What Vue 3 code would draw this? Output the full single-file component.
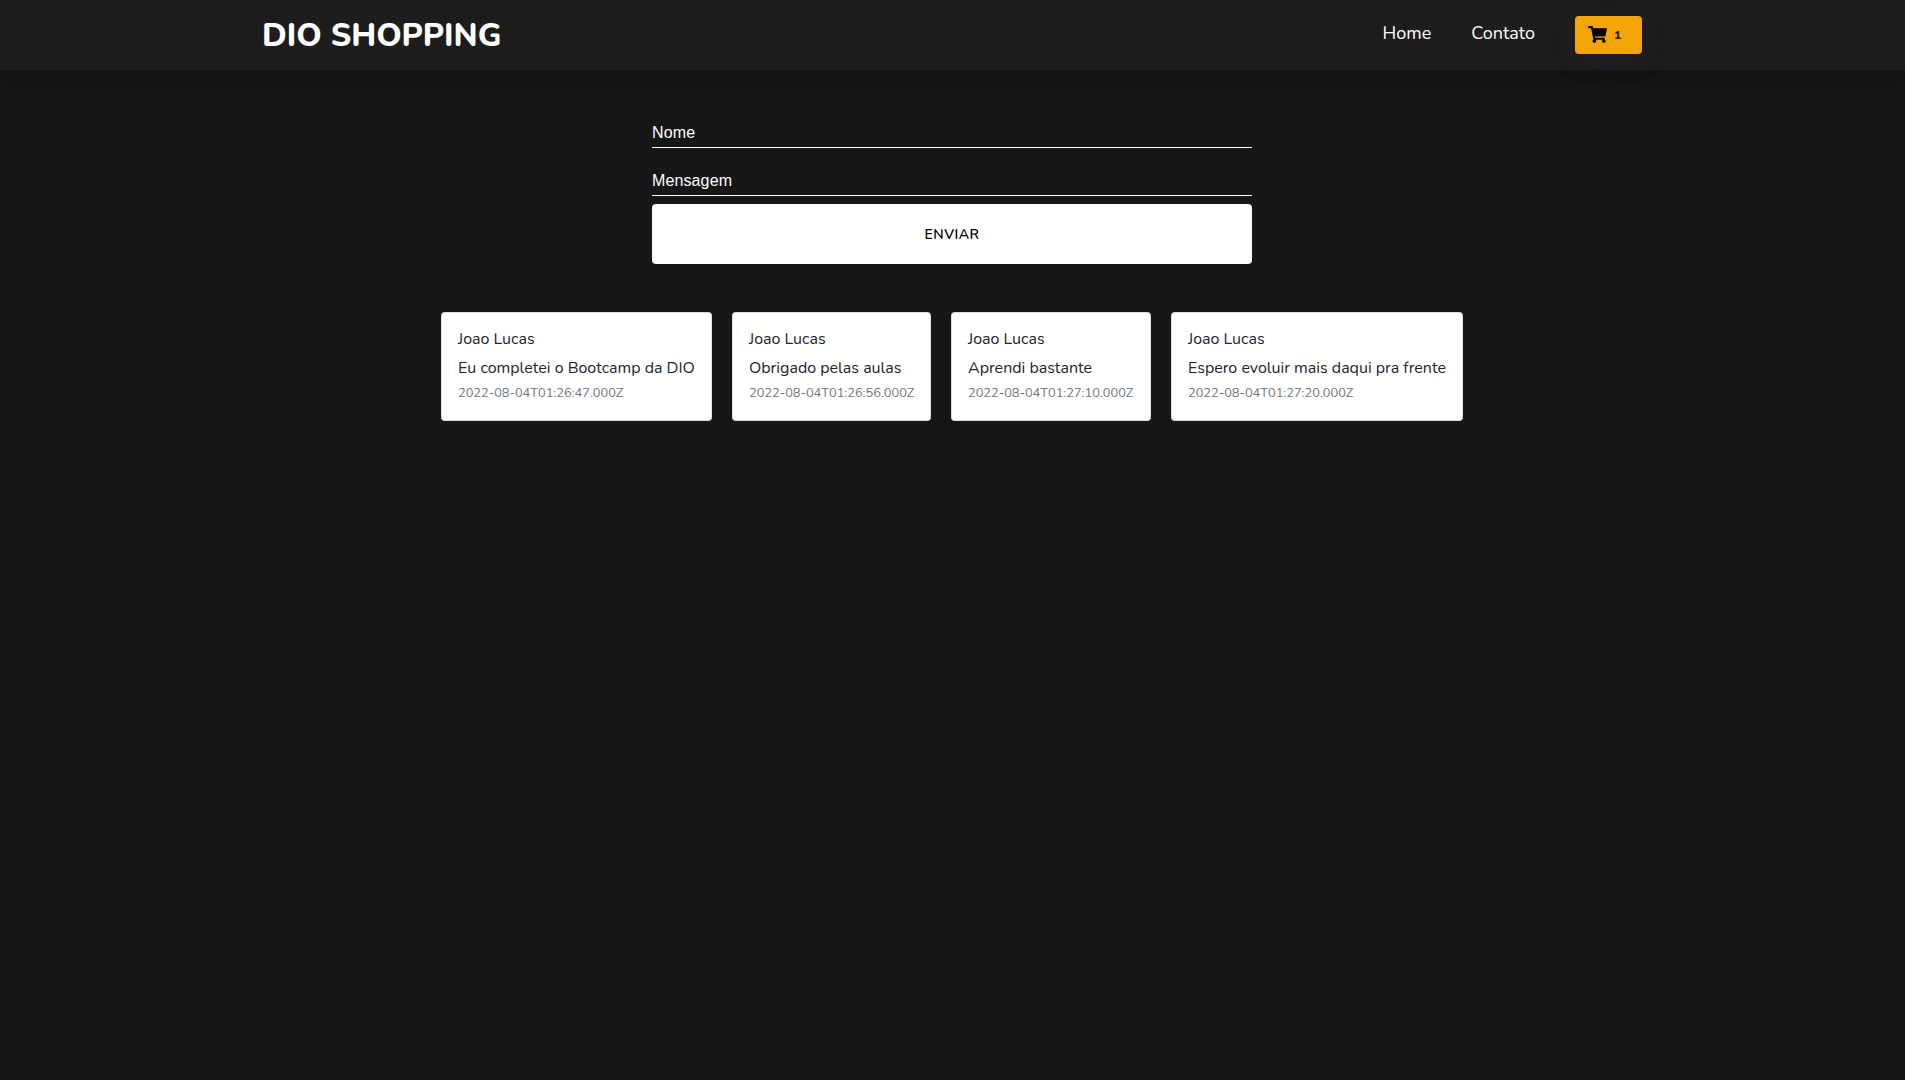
<script setup>
const links = ['Home', 'Contato']
const messages = [
  { id: 1, name: 'Joao Lucas', text: 'Eu completei o Bootcamp da DIO', date: '2022-08-04T01:26:47.000Z', width: 271 },
  { id: 2, name: 'Joao Lucas', text: 'Obrigado pelas aulas', date: '2022-08-04T01:26:56.000Z', width: 199 },
  { id: 3, name: 'Joao Lucas', text: 'Aprendi bastante', date: '2022-08-04T01:27:10.000Z', width: 200 },
  { id: 4, name: 'Joao Lucas', text: 'Espero evoluir mais daqui pra frente', date: '2022-08-04T01:27:20.000Z', width: 292 },
]
</script>

<template>
  <div class="page">
    <header class="header">
      <div class="bar">
        <h1 class="logo">DIO SHOPPING</h1>
        <nav class="nav">
          <a v-for="link in links" :key="link" class="link">{{ link }}</a>
          <button class="cart" type="button">
            <svg class="cart-icon" viewBox="0 0 576 512" aria-hidden="true">
              <path d="M528.12 301.319l47.273-208C578.806 78.301 567.391 64 551.99 64H159.208l-9.166-44.81C147.758 8.021 137.93 0 126.529 0H24C10.745 0 0 10.745 0 24v16c0 13.255 10.745 24 24 24h69.883l70.248 343.435C147.325 417.1 136 435.222 136 456c0 30.928 25.072 56 56 56s56-25.072 56-56c0-15.674-6.447-29.835-16.824-40h209.647C430.447 426.165 424 440.326 424 456c0 30.928 25.072 56 56 56s56-25.072 56-56c0-22.172-12.888-41.332-31.579-50.405l5.517-24.276c3.413-15.018-8.002-29.319-23.403-29.319H218.117l-6.545-32h293.145c11.206 0 20.92-7.754 23.403-18.681z" />
            </svg>
            <span class="count">1</span>
          </button>
        </nav>
      </div>
    </header>

    <main class="main">
      <form class="form" @submit.prevent>
        <label class="field">Nome</label>
        <label class="field">Mensagem</label>
        <button class="send" type="submit">ENVIAR</button>
      </form>
      <section class="cards">
        <article v-for="m in messages" :key="m.id" class="card" :style="{ width: m.width + 'px' }">
          <h2 class="name">{{ m.name }}</h2>
          <p class="text">{{ m.text }}</p>
          <p class="date">{{ m.date }}</p>
        </article>
      </section>
    </main>
  </div>
</template>

<style>
body {
  background: #171717;
}
</style>

<style scoped>
.page {
  min-height: 1080px;
  background: #171717;
  font-family: Nunito, Lato, sans-serif;
  color: #212529;
}
.header {
  height: 70px;
  background: #1d1d1d;
  box-shadow: 0 8px 16px rgba(0, 0, 0, 0.25);
}
.bar,
.main {
  width: 1380px;
  margin-left: calc((100% - 1381px) / 2);
}
.bar {
  display: flex;
  justify-content: space-between;
  align-items: center;
  height: 70px;
}
.logo {
  margin: 2px 0 0;
  font-size: 32px;
  line-height: 40px;
  font-weight: 800;
  color: #fff;
}
.nav {
  display: flex;
  align-items: center;
}
.link {
  color: #fff;
  font-size: 18px;
  line-height: 24px;
  margin: 0 40px 4px 0;
}
.cart {
  display: flex;
  align-items: center;
  box-sizing: border-box;
  width: 67px;
  height: 38px;
  padding: 0 0 0 13px;
  border: 0;
  border-radius: 4px;
  background: #f2a504;
  box-shadow: 0 8px 24px rgba(50, 50, 93, 0.2);
  font-family: inherit;
}
.cart-icon {
  width: 19px;
  height: 17px;
  margin-bottom: 2px;
}
.count {
  margin-left: 7px;
  font-size: 12px;
  line-height: 16px;
  font-weight: 800;
  color: #212529;
}
.form {
  display: flex;
  flex-direction: column;
  width: 600px;
  margin: 50px auto 0;
}
.field {
  box-sizing: border-box;
  height: 28px;
  margin-bottom: 20px;
  padding-top: 3px;
  border-bottom: 1px solid #fff;
  font: 16px/20px "Liberation Sans", Arial, sans-serif;
  letter-spacing: 0.12px;
  color: #fff;
}
.field + .field {
  margin-bottom: 8px;
}
.send {
  height: 60px;
  border: 0;
  border-radius: 4px;
  background: #fff;
  color: #000;
  font-family: inherit;
  font-size: 14px;
  font-weight: 600;
  letter-spacing: 0.5px;
}
.cards {
  display: flex;
  justify-content: center;
  gap: 20px;
  margin-top: 48px;
}
.card {
  box-sizing: border-box;
  height: 109px;
  padding: 16px;
  border: 1px solid rgba(0, 0, 0, 0.125);
  border-radius: 4px;
  background: #fff;
  white-space: nowrap;
}
.name,
.text {
  margin: 0;
  font-size: 16px;
  font-weight: 400;
  line-height: 20px;
}
.text {
  margin-top: 9px;
}
.date {
  margin: 6px 0 0;
  font-size: 12.8px;
  line-height: 18px;
  color: #6c757d;
}
</style>
